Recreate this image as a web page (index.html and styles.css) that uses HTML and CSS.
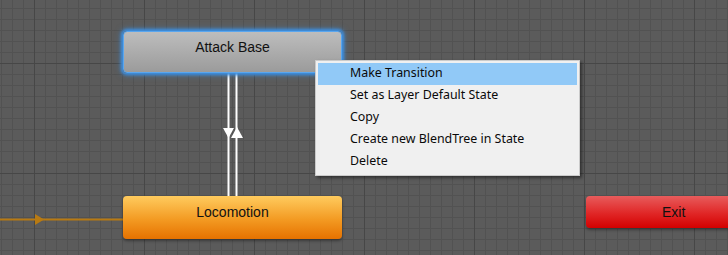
FILE: index.html
```html
<!DOCTYPE html>
<html lang="en">
<head>
    <meta charset="UTF-8">
    <title>Animator</title>
    <link rel="stylesheet" href="styles.css">
</head>
<body>
<div class="graph">
    <!-- transitions -->
    <svg class="wires" width="728" height="255" viewBox="0 0 728 255">
        <line x1="0" y1="219.5" x2="123" y2="219.5" stroke="#b87a12" stroke-width="2"/>
        <polygon points="35,214 44,219.5 35,225" fill="#b87a12"/>
        <line x1="228.5" y1="73" x2="228.5" y2="196" stroke="#fff" stroke-width="2"/>
        <line x1="236.5" y1="73" x2="236.5" y2="196" stroke="#fff" stroke-width="2"/>
        <polygon points="223,128 234,128 228.5,138" fill="#fff"/>
        <polygon points="231,138 243,138 237,127" fill="#fff"/>
    </svg>

    <div class="node node-selected node-base">Attack Base</div>
    <div class="node node-default node-loco">Locomotion</div>
    <div class="node node-exit">Exit</div>

    <ul class="menu">
        <li class="active">Make Transition</li>
        <li>Set as Layer Default State</li>
        <li>Copy</li>
        <li>Create new BlendTree in State</li>
        <li>Delete</li>
    </ul>
</div>
</body>
</html>
```

FILE: styles.css
```css
* {
    box-sizing: border-box;
}

body {
    margin: 0;
    padding: 0;
    overflow: hidden;
}

.graph {
    position: relative;
    width: 728px;
    height: 255px;
    background-color: #5b5b5b;
    background-image:
        linear-gradient(to right, #474747 1px, transparent 1px),
        linear-gradient(to bottom, #474747 1px, transparent 1px),
        linear-gradient(to right, #525252 1px, transparent 1px),
        linear-gradient(to bottom, #525252 1px, transparent 1px);
    background-size: 110px 110px, 110px 110px, 11px 11px, 11px 11px;
    background-position: 34px 0, 0 63px, 1px 0, 0 8px;
    font-family: "Liberation Sans", Arial, sans-serif;
}

.wires {
    position: absolute;
    left: 0;
    top: 0;
}

.node {
    position: absolute;
    display: flex;
    justify-content: center;
    align-items: center;
    font-size: 14px;
    color: #111;
    border-radius: 4px;
    box-shadow: 0 2px 3px rgba(0, 0, 0, 0.35);
}

.node-base {
    left: 123px;
    top: 31px;
    width: 219px;
    height: 42px;
    padding-bottom: 10px;
    background: linear-gradient(to bottom, #bdbdbd, #9b9b9b);
    border: 1px solid #5aa6ee;
    box-shadow: 0 0 3px 2px #3d8fe0, 0 0 6px 2px rgba(61, 143, 224, 0.5);
}

.node-loco {
    left: 123px;
    top: 196px;
    width: 219px;
    height: 43px;
    padding-bottom: 11px;
    background: linear-gradient(to bottom, #ffcb5e, #f39a22 55%, #e67200);
}

.node-exit {
    left: 586px;
    top: 196px;
    width: 160px;
    height: 32px;
    justify-content: flex-start;
    padding-left: 76px;
    background: linear-gradient(to bottom, #e85c5c, #e02626 55%, #d40000);
}

.menu {
    position: absolute;
    left: 315px;
    top: 60px;
    width: 265px;
    margin: 0;
    padding: 2px 2px;
    list-style: none;
    background-color: #f0f0f0;
    border: 1px solid #cbcbcb;
    box-shadow: 2px 2px 3px rgba(0, 0, 0, 0.45);
    font-family: "Noto Sans", "Noto Sans CJK SC", sans-serif;
    font-size: 12.4px;
    color: #0a0a0a;
}

.menu li {
    height: 22px;
    line-height: 20px;
    padding-left: 32px;
}

.menu li.active {
    background-color: #91c9f7;
}
```
